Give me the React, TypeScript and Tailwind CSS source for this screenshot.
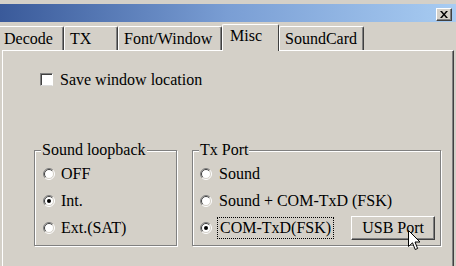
import React, { useState } from "react";

const FACE = "bg-[#d4d0c8]";

// Classic 3D radio button drawn as svg
const Radio = ({ checked }: { checked: boolean }) => (
  <svg width="12" height="12" viewBox="0 0 12 12" className="shrink-0">
    <circle cx="6" cy="6" r="5" fill="#fff" />
    <path d="M2.1 9.9 A5.5 5.5 0 0 1 9.9 2.1" stroke="#808080" strokeWidth="1" fill="none" />
    <path d="M9.9 2.1 A5.5 5.5 0 0 1 2.1 9.9" stroke="#fff" strokeWidth="1" fill="none" />
    <path d="M2.8 9.2 A4.5 4.5 0 0 1 9.2 2.8" stroke="#404040" strokeWidth="1" fill="none" />
    <path d="M9.2 2.8 A4.5 4.5 0 0 1 2.8 9.2" stroke="#d4d0c8" strokeWidth="1" fill="none" />
    {checked && <circle cx="6" cy="6" r="2" fill="#000" />}
  </svg>
);

const GroupBox = ({ title, width, children }: { title: string; width: string; children: React.ReactNode }) => (
  <div
    className={`relative ${width} h-[96px] border border-[#808080] shadow-[inset_1px_1px_0_#fff,1px_1px_0_#fff] pt-[9px] flex flex-col`}
  >
    <span className={`absolute top-[-10px] left-[6px] px-[1px] leading-[18px] ${FACE}`}>{title}</span>
    {children}
  </div>
);

const Tab = ({ label, width, selected }: { label: string; width: string; selected?: boolean }) => (
  <div
    className={
      selected
        ? `relative z-10 ${width} h-[27px] mb-[-1px] ${FACE} border-l border-t border-white border-r border-r-[#404040] rounded-t-[2px] pl-[7px] pt-[2px] leading-[18px]`
        : `${width} h-[24px] ${FACE} border-l border-t border-white border-r border-r-[#404040] shadow-[inset_-1px_0_0_#808080] rounded-t-[2px] pl-[5px] pt-[3px] leading-[18px]`
    }
  >
    {label}
  </div>
);

const App = () => {
  const [loopback, setLoopback] = useState(1);
  const [txPort, setTxPort] = useState(2);

  const loopbackItems = ["OFF", "Int.", "Ext.(SAT)"];

  return (
    <div
      className={`relative w-[456px] h-[266px] overflow-hidden ${FACE} text-black text-[16px] flex flex-col font-['Liberation_Serif','Times_New_Roman',serif]`}
    >
      <div className="h-[4px]" />
      {/* title bar */}
      <div className="h-[18px] bg-gradient-to-r from-[#3a5a9a] via-[#7a9ed4] to-[#a8ccf2] flex justify-end pt-[4px] pr-[4px]">
        <div className="w-[16px] h-[13px] bg-[#d4d0c8] border border-t-white border-l-white border-r-[#404040] border-b-[#404040] shadow-[inset_-1px_-1px_0_#808080] flex items-center justify-center">
          <svg width="8" height="7" viewBox="0 0 8 7">
            <path d="M0 0 L2 0 L4 2.5 L6 0 L8 0 L5 3.5 L8 7 L6 7 L4 4.5 L2 7 L0 7 L3 3.5 Z" fill="#000" />
          </svg>
        </div>
      </div>

      {/* tabs */}
      <div className="mt-[2px] h-[26px] flex items-end ml-[-2px]">
        <Tab label="Decode" width="w-[66px]" />
        <Tab label="TX" width="w-[54px]" />
        <Tab label="Font/Window" width="w-[104px]" />
        <Tab label="Misc" width="w-[57px]" selected />
        <Tab label="SoundCard" width="w-[85px]" />
      </div>

      {/* tab page */}
      <div className="ml-[2px] w-[452px] flex-1 border-t border-l border-white border-r border-r-[#404040] shadow-[inset_-1px_0_0_#808080] pl-[37px] pt-[22px]">
        <label className="flex items-center h-[13px] gap-[7px]">
          <span className="w-[13px] h-[13px] bg-white border border-t-[#808080] border-l-[#808080] border-r-white border-b-[#dcdcdc] shadow-[inset_1px_1px_0_#404040]" />
          <span className="leading-[18px]">Save window location</span>
        </label>

        <div className="mt-[64px] ml-[-6px] flex gap-[15px]">
          <GroupBox title="Sound loopback" width="w-[143px]">
            {loopbackItems.map((item, i) => (
              <div
                key={item}
                className="h-[27px] flex items-center gap-[6px] pl-[8px] cursor-default"
                onClick={() => setLoopback(i)}
              >
                <Radio checked={loopback === i} />
                <span className="leading-[18px]">{item}</span>
              </div>
            ))}
          </GroupBox>

          <GroupBox title="Tx Port" width="w-[249px]">
            <div className="h-[27px] flex items-center gap-[7px] pl-[7px]" onClick={() => setTxPort(0)}>
              <Radio checked={txPort === 0} />
              <span className="leading-[18px]">Sound</span>
            </div>
            <div className="h-[27px] flex items-center gap-[7px] pl-[7px]" onClick={() => setTxPort(1)}>
              <Radio checked={txPort === 1} />
              <span className="leading-[18px]">Sound + COM-TxD (FSK)</span>
            </div>
            <div className="h-[27px] flex items-center pl-[7px]">
              <div className="flex items-center gap-[5px]" onClick={() => setTxPort(2)}>
                <Radio checked={txPort === 2} />
                <span className="h-[22px] leading-[20px] px-[2px] border border-dotted border-black">COM-TxD(FSK)</span>
              </div>
              <button className="ml-[17px] w-[84px] h-[24px] bg-[#d4d0c8] border border-t-white border-l-white border-r-[#404040] border-b-[#404040] shadow-[inset_-1px_-1px_0_#808080] leading-[18px]">
                USB Port
              </button>
            </div>
          </GroupBox>
        </div>
      </div>

      {/* mouse pointer */}
      <svg className="absolute left-[408px] top-[230px]" width="13" height="21" viewBox="0 0 13 21">
        <path d="M0.5 0.5 L0.5 16.5 L4.5 12.8 L7.2 19.5 L9.6 18.5 L7 12 L12 12 Z" fill="#fff" stroke="#000" strokeWidth="1" strokeLinejoin="miter" />
      </svg>
    </div>
  );
};

export default App;
